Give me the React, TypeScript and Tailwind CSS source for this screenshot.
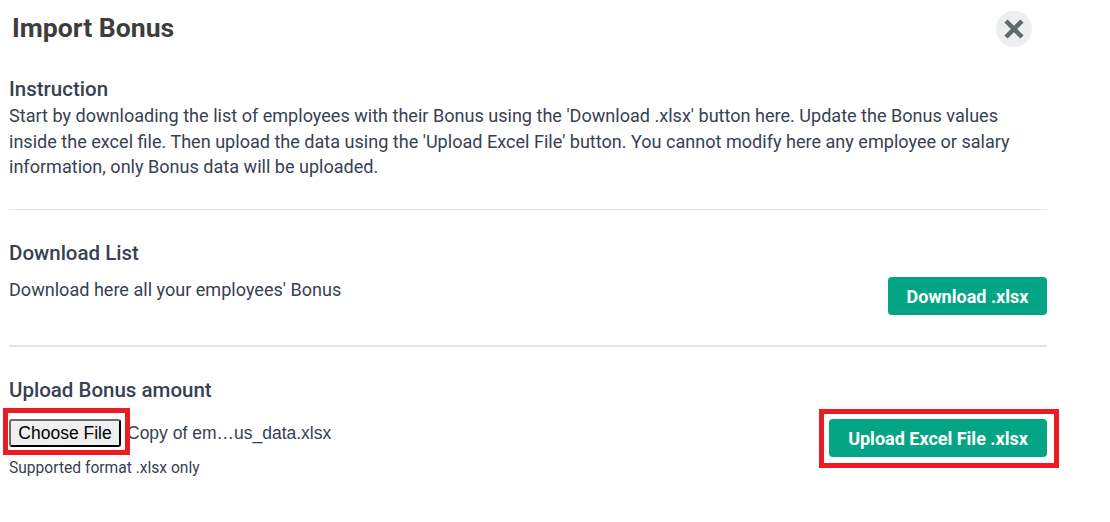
import React from 'react'

const App: React.FC = () => {
  return (
    <div className="min-h-screen w-[1110px] bg-white font-['Roboto',sans-serif] text-[#374151]">
      <div className="w-[1047px] pl-[9px]">
        {/* Header */}
        <div className="flex h-[57px] items-center justify-between pr-[15px]">
          <h1 className="pb-[2px] pl-[3px] text-[26.6px] font-bold leading-[28px] text-[#3d3d3d]">Import Bonus</h1>
          <button className="flex h-9 w-9 items-center justify-center rounded-full bg-[#eceef0]">
            <svg width="22" height="22" viewBox="0 0 22 22" fill="none">
              <path d="M3 3 19 19M19 3 3 19" stroke="#5f6b6b" strokeWidth="4.5" />
            </svg>
          </button>
        </div>

        {/* Instruction */}
        <section className="h-[153px] border-b border-[#e2e5e8] pt-[20px]">
          <h2 className="text-[20.5px] font-medium leading-[24px]">Instruction</h2>
          <p className="mt-[2px] w-[1025px] text-[18.07px] leading-[25.6px]">
            Start by downloading the list of employees with their Bonus using the 'Download .xlsx' button here. Update the Bonus values inside the excel file. Then upload the data using the 'Upload Excel File' button. You cannot modify here any employee or salary information, only Bonus data will be uploaded.
          </p>
        </section>

        {/* Download */}
        <section className="flex h-[137px] items-start justify-between border-b-2 border-[#e2e5e8] pt-[31px]">
          <div>
            <h2 className="text-[20.5px] font-medium leading-[24px]">Download List</h2>
            <p className="mt-[13px] text-[18.07px] leading-[24px]">Download here all your employees' Bonus</p>
          </div>
          <button className="mt-[36px] flex h-[38px] w-[159px] items-center justify-center rounded bg-[#04a584] pt-[1px] text-lg font-bold text-white">
            Download .xlsx
          </button>
        </section>

        {/* Upload */}
        <section className="flex items-start justify-between pt-[31px]">
          <div>
            <h2 className="text-[20.5px] font-medium leading-[24px]">Upload Bonus amount</h2>
            <div className="mt-[17px] flex items-center">
              <div className="relative">
                <button className="flex h-[28px] w-[112px] items-center justify-center rounded-[3px] border-2 border-t-[#6b6b6b] border-l-[#6b6b6b] border-r-black border-b-black bg-[#efefef] font-['Liberation_Sans',sans-serif] text-[17.5px] text-black">
                  Choose File
                </button>
                <div className="pointer-events-none absolute top-[-11px] left-[-6px] h-[47px] w-[127px] border-[5px] border-[#ed1c24]" />
              </div>
              <span className="ml-[6px] font-['Liberation_Sans',sans-serif] text-[17.5px] text-[#374151]">Copy of em…us_data.xlsx</span>
            </div>
            <p className="mt-[11px] text-[15.6px] leading-[20px]">Supported format .xlsx only</p>
          </div>
          <div className="relative mt-[41px]">
            <button className="flex h-[38px] w-[218px] items-center justify-center rounded bg-[#04a584] pt-[1px] text-lg font-bold text-white">
              Upload Excel File .xlsx
            </button>
            <div className="pointer-events-none absolute top-[-10px] left-[-10px] h-[59px] w-[240px] border-[5px] border-[#ed1c24]" />
          </div>
        </section>
      </div>
    </div>
  )
}

export default App
